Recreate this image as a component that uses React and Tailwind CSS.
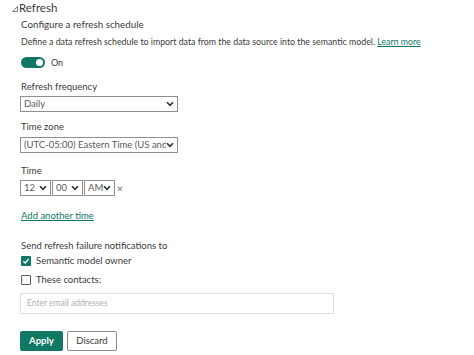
import React from "react";

const font = { fontFamily: 'Lato, "Open Sans", sans-serif' };

function Chevron() {
  return (
    <svg width="8" height="6" viewBox="0 0 8 6" className="shrink-0">
      <path d="M1 1.2 L4 4.3 L7 1.2" fill="none" stroke="#323130" strokeWidth="1.6" />
    </svg>
  );
}

function Select({ value, className = "" }) {
  return (
    <div className={`flex items-center justify-between border border-[#8f8f8f] bg-white h-[16px] pl-[3px] pr-[3px] ${className}`}>
      <span className="text-[9.5px] text-[#5a5a5a] whitespace-nowrap overflow-hidden leading-none">{value}</span>
      <Chevron />
    </div>
  );
}

export default function App() {
  return (
    <div className="w-[474px] h-[355px] bg-white text-[#3b3a39] overflow-hidden" style={font}>
      <div className="flex items-center h-[16px] pl-[12px]">
        <svg width="6" height="6" viewBox="0 0 6 6" className="mr-[1px] mt-[1px]">
          <path d="M5.5 0.5 L5.5 5.5 L0.5 5.5 Z" fill="none" stroke="#605e5c" strokeWidth="0.8" />
        </svg>
        <span className="text-[11.5px] leading-[16px]">Refresh</span>
      </div>
      <div className="pl-[21px]">
        <div className="mt-[1px] h-[14px] text-[9.8px] leading-[14px]">Configure a refresh schedule</div>
        <div className="mt-[4px] h-[14px] text-[8.8px] leading-[14px] whitespace-nowrap">
          Define a data refresh schedule to import data from the data source into the semantic model.{" "}
          <span className="text-[#117865] underline">Learn more</span>
        </div>
        <div className="mt-[8px] h-[11px] flex items-center">
          <div className="w-[24px] h-[11px] rounded-full bg-[#117865] flex items-center justify-end pr-[2px]">
            <div className="w-[7px] h-[7px] rounded-full bg-white" />
          </div>
          <span className="ml-[6px] text-[9px] leading-none">On</span>
        </div>
        <div className="mt-[12px] h-[14px] text-[9.5px] leading-[14px]">Refresh frequency</div>
        <Select value="Daily" className="mt-[2px] w-[158px] -ml-[1px]" />
        <div className="mt-[8px] h-[14px] text-[9.5px] leading-[14px]">Time zone</div>
        <Select value="(UTC-05:00) Eastern Time (US and Canada)" className="mt-[3px] w-[158px] -ml-[1px]" />
        <div className="mt-[11px] h-[14px] text-[9.5px] leading-[14px]">Time</div>
        <div className="mt-[2px] flex items-center -ml-[1px]">
          <Select value="12" className="w-[31px]" />
          <Select value="00" className="w-[31px] ml-[1px]" />
          <Select value="AM" className="w-[31px] ml-[1px]" />
          <span className="ml-[2px] text-[10px] leading-none text-[#605e5c]">×</span>
        </div>
        <div className="mt-[13px] h-[14px] text-[9.5px] leading-[14px] text-[#117865] underline">Add another time</div>
        <div className="mt-[16px] h-[14px] text-[9.5px] leading-[14px]">Send refresh failure notifications to</div>
        <div className="mt-[2px] h-[12px] flex items-center">
          <div className="w-[10px] h-[10px] rounded-[1px] bg-[#117865] flex items-center justify-center">
            <svg width="8" height="8" viewBox="0 0 8 8">
              <path d="M1.3 4.2 L3.2 6 L6.7 2" fill="none" stroke="white" strokeWidth="1.3" />
            </svg>
          </div>
          <span className="ml-[5px] text-[9.5px] leading-none">Semantic model owner</span>
        </div>
        <div className="mt-[7px] h-[12px] flex items-center">
          <div className="w-[10px] h-[10px] rounded-[1px] border border-[#605e5c] bg-white" />
          <span className="ml-[5px] text-[9.5px] leading-none">These contacts:</span>
        </div>
        <div className="mt-[7px] -ml-[1px] w-[314px] h-[21px] border border-[#e1dfdd] flex items-center pl-[6px]">
          <span className="text-[8.5px] text-[#b3b0ad] leading-none">Enter email addresses</span>
        </div>
        <div className="mt-[17px] -ml-[1px] flex items-center gap-[4px]">
          <div className="w-[43px] h-[20px] rounded-[2px] bg-[#117865] flex items-center justify-center text-white text-[9.5px] font-bold leading-none">
            Apply
          </div>
          <div className="w-[50px] h-[20px] rounded-[2px] border border-[#8a8886] bg-white flex items-center justify-center text-[9.5px] leading-none">
            Discard
          </div>
        </div>
      </div>
    </div>
  );
}
